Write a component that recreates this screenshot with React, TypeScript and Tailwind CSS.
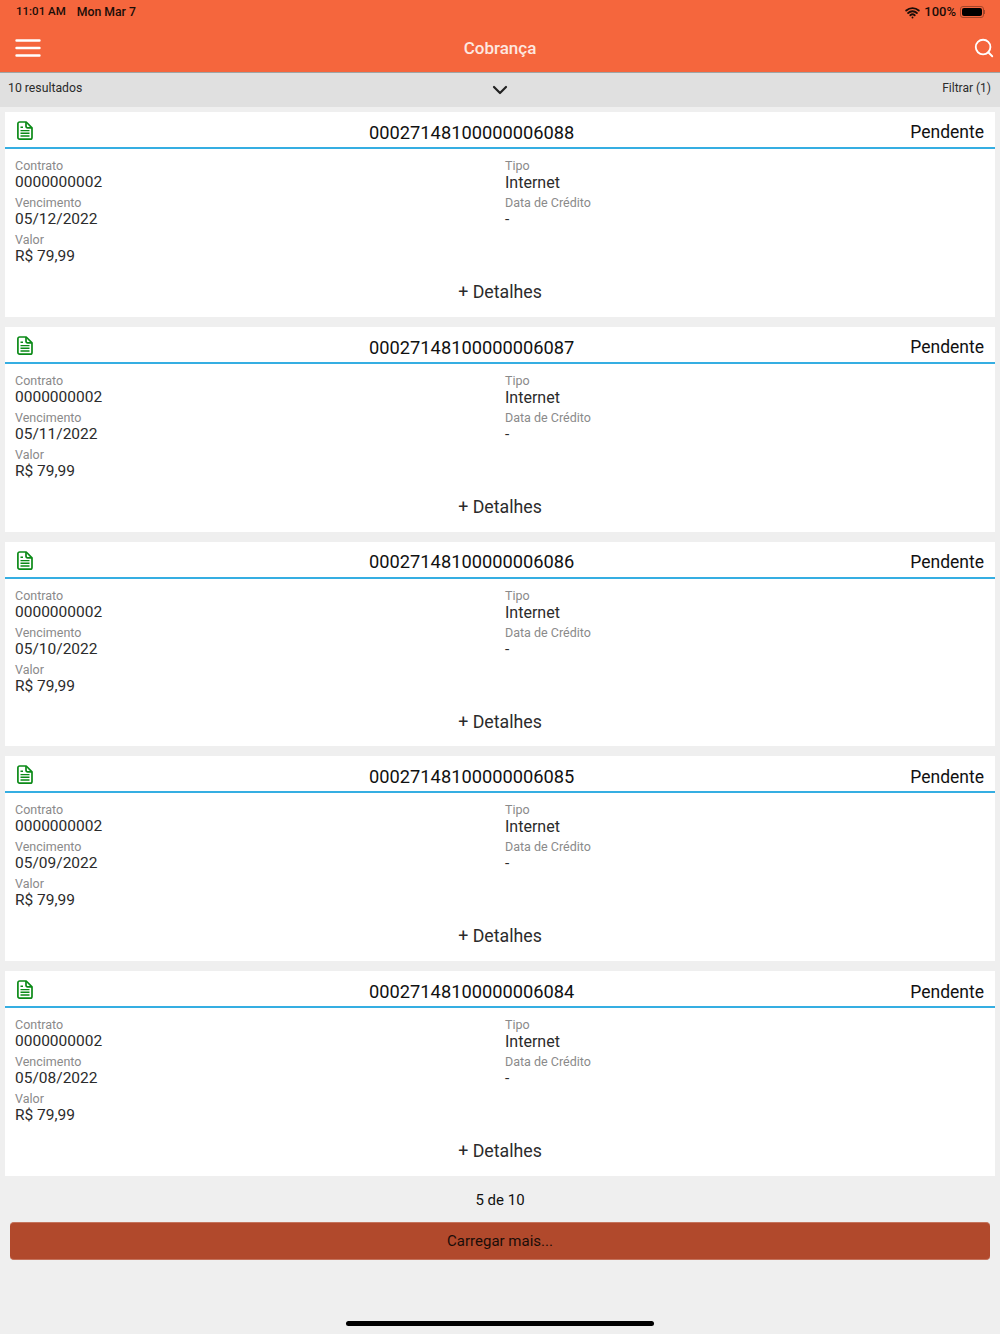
import { Search, ChevronDown, Wifi } from 'lucide-react'

const BILLS = [
  { id: '00027148100000006088', due: '05/12/2022' },
  { id: '00027148100000006087', due: '05/11/2022' },
  { id: '00027148100000006086', due: '05/10/2022' },
  { id: '00027148100000006085', due: '05/09/2022' },
  { id: '00027148100000006084', due: '05/08/2022' },
]

function DocIcon() {
  return (
    <svg width="16" height="19" viewBox="0 0 16 19" fill="none" stroke="#0b8a17" strokeWidth="1.7" strokeLinejoin="round">
      <path d="M2.6 1h6.6L15 6.8v9.6a1.7 1.7 0 0 1-1.7 1.7H2.6A1.7 1.7 0 0 1 .9 16.400V2.700A1.700 1.700 0 0 1 2.600 1z" />
      <path d="M9 1v4.300a1.500 1.500 0 0 0 1.500 1.500H15" />
      <path d="M3.500 6.200h2.500M3.500 9.600h9M3.500 12.300h9M3.500 15h9" strokeWidth="1.400" />
    </svg>
  )
}

function MenuIcon() {
  return (
    <svg width="26" height="18" viewBox="0 0 26 18" fill="none" stroke="#fff" strokeWidth="2.4" strokeLinecap="round">
      <path d="M1.500 1.500h23M1.500 9h23M1.500 16.500h23" />
    </svg>
  )
}

function Field({ label, value, wide }: { label: string; value: string; wide?: boolean }) {
  return (
    <div className="h-[37px]">
      <div className="text-[12.5px] leading-[14px] text-[#8a8a8a]">{label}</div>
      <div className={`leading-[19px] text-[#2b2b2b] ${wide ? 'text-[16px]' : 'text-[15.5px]'}`}>{value}</div>
    </div>
  )
}

function BillCard({ id, due }: { id: string; due: string }) {
  return (
    <div className="h-[204.8px] bg-white">
      <div className="flex h-[37px] items-center border-b-2 border-[#35aee2] pl-[12px] pr-[11px] pt-[6px]">
        <div className="w-[16px] -translate-y-[2px]">
          <DocIcon />
        </div>
        <div className="flex-1 text-center text-[18.25px] text-[#111]">{id}</div>
        <div className="text-[17.5px] text-[#111]">Pendente</div>
      </div>
      <div className="flex pl-[10px] pt-[10px]">
        <div className="w-[490px]">
          <Field label="Contrato" value="0000000002" />
          <Field label="Vencimento" value={due} />
          <Field label="Valor" value="R$ 79,99" />
        </div>
        <div>
          <Field label="Tipo" value="Internet" wide />
          <Field label="Data de Crédito" value="-" />
        </div>
      </div>
      <div className="pt-[11px] text-center text-[17.75px] leading-[22px] text-[#2b2b2b]">+ Detalhes</div>
    </div>
  )
}

export default function App() {
  return (
    <div className="flex h-[1334px] w-[1000px] flex-col overflow-hidden bg-[#efefef] font-['Roboto','Liberation_Sans',sans-serif]">
      {/* Status bar + nav */}
      <div className="h-[72px] bg-[#f5663d]">
        <div className="flex h-[24px] items-center justify-between pl-[16px] pr-[15px] text-[12.25px] font-medium text-[#1a0d08]">
          <div className="flex items-center gap-[11px]">
            <span className="text-[11.5px]">11:01 AM</span>
            <span>Mon Mar 7</span>
          </div>
          <div className="flex items-center gap-[4px]">
            <Wifi size={15} strokeWidth={3} />
            <span className="text-[13px]">100%</span>
            <div className="flex items-center">
              <div className="h-[12px] w-[24px] rounded-[3px] border border-[#a3452a] p-[1px]">
                <div className="h-full w-full rounded-[2px] bg-black" />
              </div>
              <div className="h-[4px] w-[1px] bg-[#a3452a]" />
            </div>
          </div>
        </div>
        <div className="flex h-[48px] items-center pl-[15px] pr-[5px]">
          <div className="flex-1">
            <MenuIcon />
          </div>
          <div className="-translate-x-[5px] translate-y-[1px] text-[17px] font-medium text-[#fde8e0]">Cobrança</div>
          <div className="flex flex-1 justify-end">
            <Search size={22} strokeWidth={2} className="text-white" />
          </div>
        </div>
      </div>

      {/* Filter bar */}
      <div className="flex h-[35px] items-center border-t border-[#9fa5a5] bg-[#e0e0e0] pb-[4px] pl-[8px] pr-[9px] text-[#2b2b2b]">
        <span className="flex-1 text-[12.25px]">10 resultados</span>
        <ChevronDown size={24} strokeWidth={2.2} className="translate-y-[2px] text-[#222]" />
        <span className="flex-1 text-right text-[12px]">Filtrar (1)</span>
      </div>

      {/* Cards */}
      <div className="flex flex-col gap-[10px] px-[5px] pt-[5px]">
        {BILLS.map((bill) => (
          <BillCard key={bill.id} id={bill.id} due={bill.due} />
        ))}
      </div>

      <div className="pt-[15px] text-center text-[15px] leading-[18px] text-[#111]">5 de 10</div>

      <div className="mx-[10px] mt-[13px] flex h-[38px] items-center justify-center rounded-[4px] border-y border-[#c4735c] bg-[#b1492c] text-[15px] text-[#1a0d08]">
        Carregar mais...
      </div>

      <div className="mx-auto mt-[61px] h-[5px] w-[308px] rounded-full bg-black" />
    </div>
  )
}
